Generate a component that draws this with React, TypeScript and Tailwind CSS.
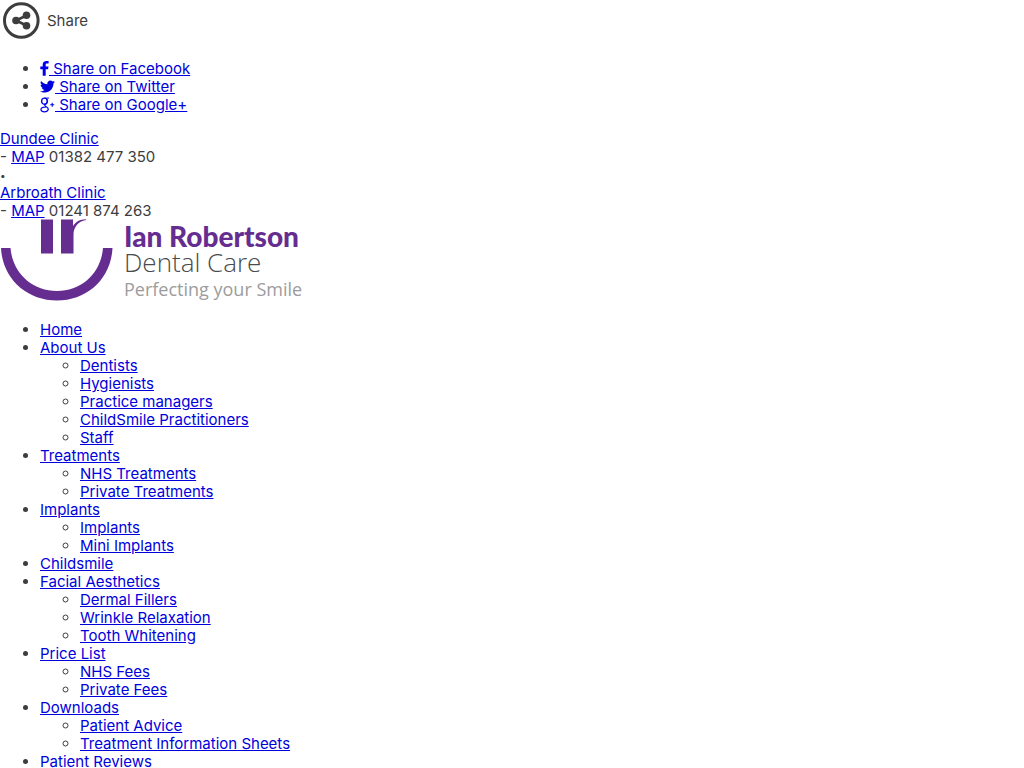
import React from 'react';
import { FaTwitter } from 'react-icons/fa';

interface NavItem {
  label: string;
  children?: string[];
}

const NAV: NavItem[] = [
  { label: 'Home' },
  {
    label: 'About Us',
    children: ['Dentists', 'Hygienists', 'Practice managers', 'ChildSmile Practitioners', 'Staff'],
  },
  { label: 'Treatments', children: ['NHS Treatments', 'Private Treatments'] },
  { label: 'Implants', children: ['Implants', 'Mini Implants'] },
  { label: 'Childsmile' },
  { label: 'Facial Aesthetics', children: ['Dermal Fillers', 'Wrinkle Relaxation', 'Tooth Whitening'] },
  { label: 'Price List', children: ['NHS Fees', 'Private Fees'] },
  { label: 'Downloads', children: ['Patient Advice', 'Treatment Information Sheets'] },
  { label: 'Patient Reviews' },
];

const Link: React.FC<{ children: React.ReactNode }> = ({ children }) => (
  <a href="#" className="text-[#0000dd] underline">
    {children}
  </a>
);

const ShareIcon = () => (
  <svg width="43" height="43" viewBox="0 0 43 43" aria-hidden="true">
    <circle cx="21.3" cy="20.5" r="16.8" fill="none" stroke="#3d3d3d" strokeWidth="3" />
    <path d="M27 15.3 L16 20.5 L27 25.7" fill="none" stroke="#3d3d3d" strokeWidth="2.6" />
    <circle cx="26.5" cy="15.3" r="3.8" fill="#3d3d3d" />
    <circle cx="16" cy="20.5" r="3.8" fill="#3d3d3d" />
    <circle cx="26.5" cy="25.7" r="3.8" fill="#3d3d3d" />
  </svg>
);

const FacebookIcon = () => (
  <svg width="9" height="16" viewBox="0 0 9 16" className="inline-block align-[-2px]" aria-hidden="true">
    <path
      fill="#0000ee"
      d="M8.6 1.1 V3.6 H7.1 C6 3.6 5.7 4.1 5.7 4.9 V6.5 H8.5 L8.1 9.3 H5.7 V15.8 H2.7 V9.3 H0.3 V6.5 H2.7 V4.5 C2.7 2.2 4.2 0.9 6.4 0.9 C7.4 0.9 8.3 1 8.6 1.1 Z"
    />
  </svg>
);

const GooglePlusIcon = () => (
  <svg width="15" height="16" viewBox="0 0 15 16" className="inline-block align-[-3px]" aria-hidden="true">
    <g fill="none" stroke="#0000ee">
      <ellipse cx="4.4" cy="4.2" rx="2.8" ry="3.1" strokeWidth="1.4" />
      <path d="M4.5 1.1 H9.2 M6.5 1.3 C8.5 3.3 7.5 5.8 5.8 7" strokeWidth="0.9" />
      <path
        d="M5.4 7 C4 8.3 5 8.9 6.6 10 C9.4 11.6 8.4 14.8 4.4 14.8 C0.3 14.8 -0.1 11.2 3 10.4 L6 10"
        strokeWidth="1.2"
      />
      <path d="M12.2 5.7 V9.7 M10.2 7.7 H14.2" strokeWidth="1.1" />
    </g>
  </svg>
);

const Logo = () => (
  <div className="flex h-[85px]">
    <svg width="124" height="85" viewBox="0 1 124 85" className="overflow-visible" aria-hidden="true">
      <g fill="#662d91">
        <path d="M1 29 H10.5 C12.5 54 32 72 57 72 C82 72 101 54 103 29 H112.5 C111 60 87 81.5 57 81.5 C27 81.5 2.5 60 1 29 Z" />
        <path d="M41 0.5 H53 V34.5 H41 Z" />
        <path d="M61 0.5 H73 V7 C76 2.5 79.5 0.5 86 0.2 V1 C78 2.5 73.5 8 73.5 16 V34.5 H61 Z" />
      </g>
    </svg>
    <div className="whitespace-nowrap">
      <div className="mt-[3px] h-[26px] font-[Lato,sans-serif] text-[28px] font-black leading-[26px] text-[#662d91]">
        Ian Robertson
      </div>
      <div className="h-[26px] font-['Open_Sans',sans-serif] text-[26px] font-light leading-[26px] text-[#4a4b4d]">
        Dental Care
      </div>
      <div className="h-7 font-['Open_Sans',sans-serif] text-lg leading-7 text-[#9c9c9c]">
        Perfecting your Smile
      </div>
    </div>
  </div>
);

export default function App() {
  return (
    <div className="min-h-screen bg-white font-[Inter,sans-serif] text-[15px] leading-[18px] text-[#3d3d3d]">
      <div className="flex h-11 items-start gap-1">
        <ShareIcon />
        <span className="mt-3">Share</span>
      </div>

      <ul className="my-4 list-disc pl-10">
        <li>
          <Link>
            <FacebookIcon /> Share on Facebook
          </Link>
        </li>
        <li>
          <Link>
            <FaTwitter className="inline-block h-[15px] w-[15px] align-[-2px]" /> Share on Twitter
          </Link>
        </li>
        <li>
          <Link>
            <GooglePlusIcon /> Share on Google+
          </Link>
        </li>
      </ul>

      <div>
        <Link>Dundee Clinic</Link>
        <div>
          - <Link>MAP</Link> 01382 477 350
        </div>
        <div className="text-[10px]">•</div>
        <Link>Arbroath Clinic</Link>
        <div>
          - <Link>MAP</Link> 01241 874 263
        </div>
      </div>

      <Logo />

      <nav>
        <ul className="my-4 list-disc pl-10">
          {NAV.map((item) => (
            <li key={item.label}>
              <Link>{item.label}</Link>
              {item.children && (
                <ul className="list-[circle] pl-10">
                  {item.children.map((child) => (
                    <li key={child}>
                      <Link>{child}</Link>
                    </li>
                  ))}
                </ul>
              )}
            </li>
          ))}
        </ul>
      </nav>
    </div>
  );
}
